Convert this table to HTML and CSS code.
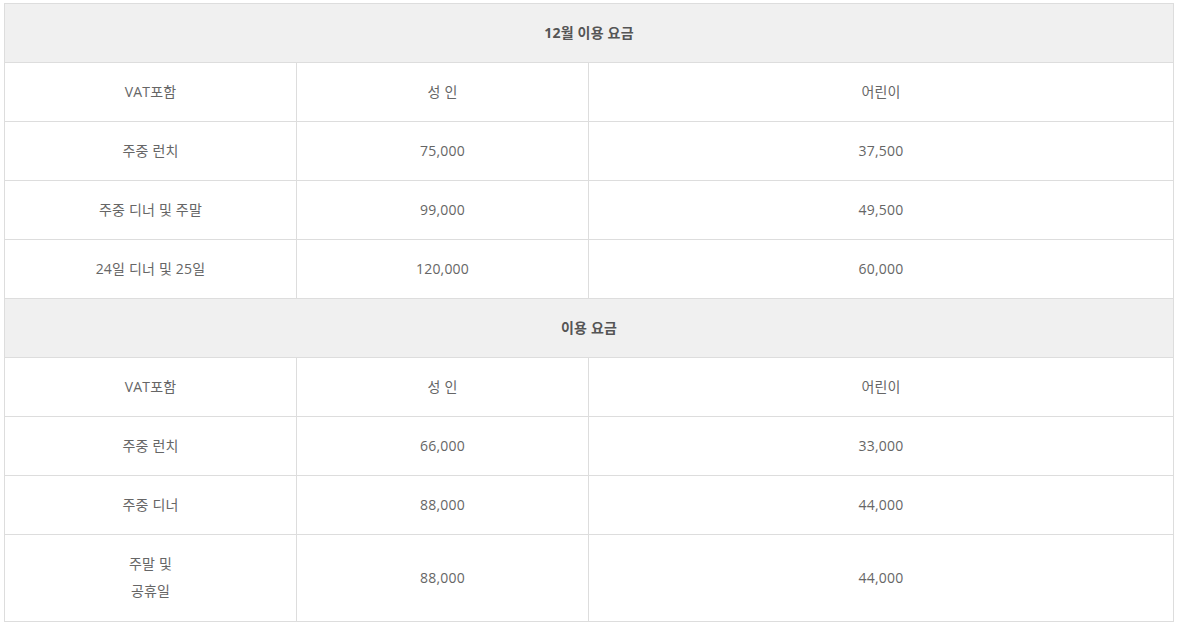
FILE: index.html
```html
<!DOCTYPE html>
<html>
<head>
<meta charset="utf-8">
<title>이용 요금</title>
<link rel="stylesheet" href="styles.css">
</head>
<body>
<div class="price">
<table class="price-table">
<colgroup>
<col class="c1">
<col class="c2">
<col class="c3">
</colgroup>
<tr class="head"><th colspan="3">12월 이용 요금</th></tr>
<tr><td>VAT포함</td><td>성 인</td><td>어린이</td></tr>
<tr><td>주중 런치</td><td>75,000</td><td>37,500</td></tr>
<tr><td>주중 디너 및 주말</td><td>99,000</td><td>49,500</td></tr>
<tr><td>24일 디너 및 25일</td><td>120,000</td><td>60,000</td></tr>
<tr class="head"><th colspan="3">이용 요금</th></tr>
<tr><td>VAT포함</td><td>성 인</td><td>어린이</td></tr>
<tr><td>주중 런치</td><td>66,000</td><td>33,000</td></tr>
<tr><td>주중 디너</td><td>88,000</td><td>44,000</td></tr>
<tr class="tall"><td>주말 및<br>공휴일</td><td>88,000</td><td>44,000</td></tr>
</table>
</div>
</body>
</html>
```

FILE: styles.css
```css
body {
  margin: 0;
  font-family: "Open Sans", "Noto Sans CJK KR", sans-serif;
  background: #fff;
}
.price { padding: 3px 3px 0 4px; }
.price-table {
  width: 1170px;
  border-collapse: collapse;
  table-layout: fixed;
  font-size: 14px;
  color: #666;
}
.c1, .c2 { width: 292px; }
.price-table th, .price-table td {
  border: 1px solid #ddd;
  text-align: center;
  padding: 15px 8px 16px;
  line-height: 27px;
  font-weight: normal;
  letter-spacing: 0.2px;
}
.price-table .tall td { padding-bottom: 17px; }
.price-table .head th {
  background: #f0f0f0;
  font-weight: bold;
  color: #555;
}
```
